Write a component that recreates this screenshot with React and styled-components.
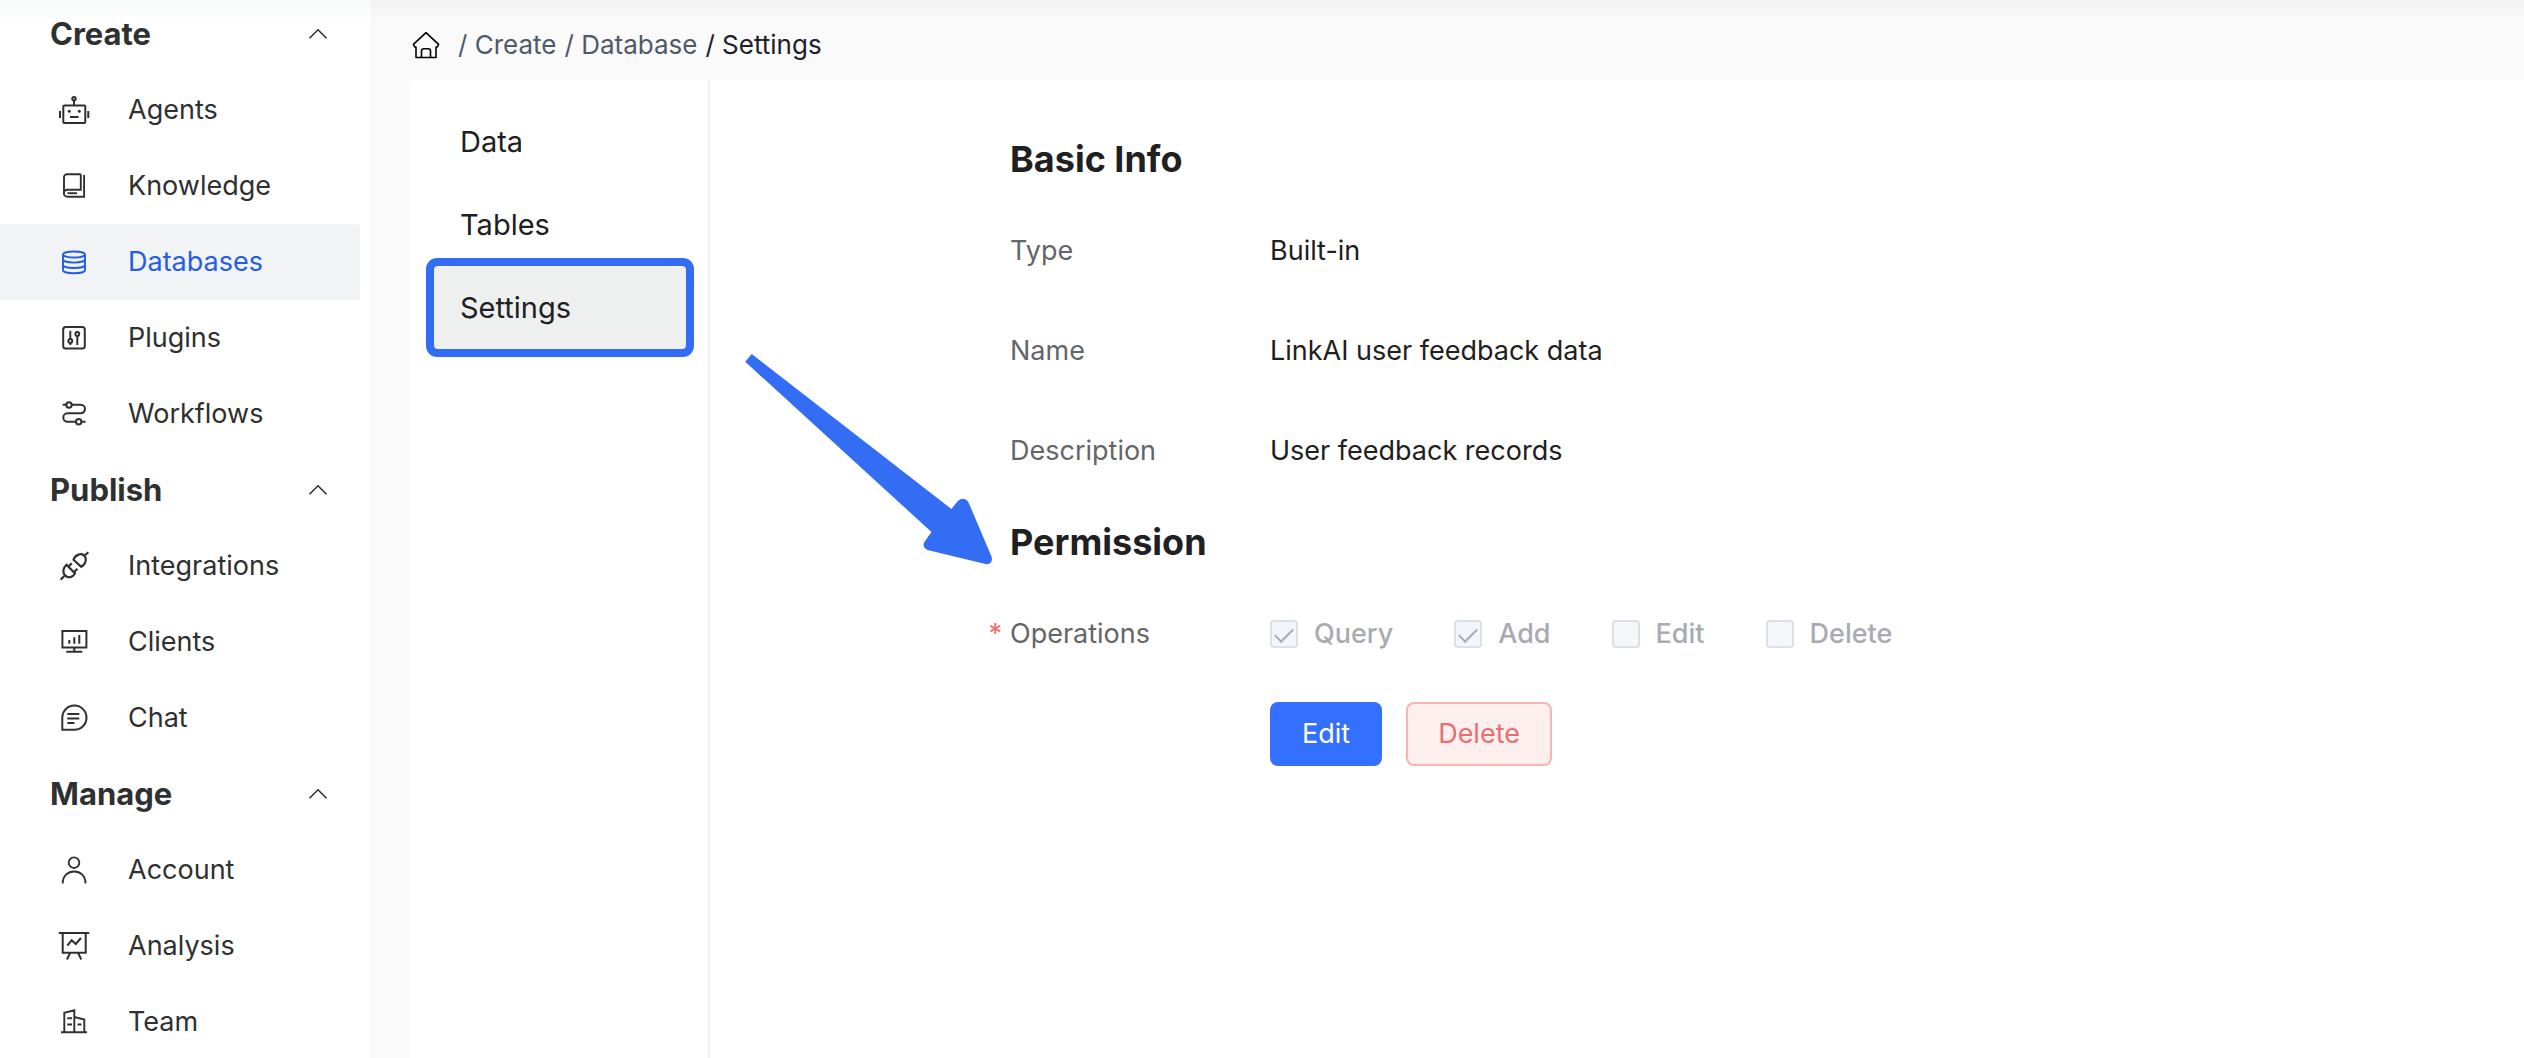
import React, { useState } from "react";
import styled, { createGlobalStyle } from "styled-components";

const Svg = ({ children, width = 2 }) => (
  <svg
    width="32"
    height="32"
    viewBox="0 0 32 32"
    fill="none"
    stroke="currentColor"
    strokeWidth={width}
    aria-hidden="true"
  >
    {children}
  </svg>
);

const HomeIcon = () => (
  <Svg width={1.6}>
    <path
      d="M6 18H4.6L3.4 15.3 16 3.7 28.6 15.3 27.4 18H26V28.5H6Z"
      strokeLinejoin="round"
    />
    <path d="M11.5 28.5V22a2.3 2.3 0 0 1 2.3-2.3h4.4a2.3 2.3 0 0 1 2.3 2.3v6.5" />
  </Svg>
);
const AgentIcon = () => (
  <Svg>
    <rect x="5.3" y="11.5" width="22" height="17.5" rx="1" />
    <circle cx="16" cy="4.7" r="1.7" />
    <path d="M16 6.4v5M2 17v7M30.3 17v7M12 23h8.6" />
    <circle cx="11.3" cy="17.2" r="1.5" fill="currentColor" stroke="none" />
    <circle cx="21.3" cy="17.2" r="1.5" fill="currentColor" stroke="none" />
  </Svg>
);
const BookIcon = () => (
  <Svg width={1.9}>
    <path d="M22.8 4.3H9a3 3 0 0 0-3 3V23.3" />
    <path d="M22.8 4.3V19.8H9.3a3.4 3.4 0 0 0 0 6.9H26.1V5" />
    <path d="M9.5 23.2H19" />
  </Svg>
);
const DatabaseIcon = () => (
  <Svg width={1.9}>
    <ellipse cx="16" cy="8.5" rx="11" ry="3" />
    <path d="M5 8.5v15.7c0 1.7 4.9 3 11 3s11-1.3 11-3V8.5" />
    <path d="M5 13.6c0 1.7 4.9 3 11 3s11-1.3 11-3" />
    <path d="M5 19c0 1.7 4.9 3 11 3s11-1.3 11-3" />
  </Svg>
);
const PluginIcon = () => (
  <Svg>
    <rect x="5.2" y="5" width="21.6" height="21.4" rx="2.5" />
    <path d="M12.3 8.7V17M12.3 21v2M19.3 9v1M19.3 14v9" />
    <circle cx="12.3" cy="19" r="1.9" />
    <circle cx="19.3" cy="12" r="1.9" />
  </Svg>
);
const WorkflowIcon = () => (
  <Svg>
    <path d="M4.7 6.7H8.3M13.8 6.7H22.7a4.3 4.3 0 0 1 0 8.6H9.5a4.2 4.2 0 0 0 0 8.4H18M23.4 23.7H27.6" />
    <circle cx="11" cy="7" r="2.7" />
    <circle cx="20.7" cy="23.7" r="2.7" />
  </Svg>
);
const IntegrationIcon = () => (
  <Svg width={2.2}>
    <path d="M15.5 9.8L23.3 16.8C26.5 15 28.8 11 27.4 7.2 26 4.2 23 3.6 20.6 4.6 18 5.6 16.2 7.4 15.5 9.8Z" />
    <path d="M27 5.3L30.3 2.3M2.7 29.6L6.3 26" />
    <path d="M8.5 14.8L17 23.5C14.7 27.3 10.5 28.6 7.3 25.6 4.3 22.6 4.8 18.2 8.5 14.8Z" />
    <path d="M10.8 16.3L13.8 13.3M16.4 21.7L19.4 18.8" />
  </Svg>
);
const ClientIcon = () => (
  <Svg>
    <rect x="4.4" y="5" width="24" height="16.5" />
    <path d="M11.3 14v3.8M16.3 11.3v6.5M21.3 9v8.8M16.3 21.5v4.2M8.3 25.7h16" />
  </Svg>
);
const ChatIcon = () => (
  <Svg>
    <path d="M4.3 27.7V15.5a12.1 12.1 0 1 1 12.1 12.2Z" />
    <path d="M9.3 12h12M9.3 16.4h12M9.3 21H16.5" />
  </Svg>
);
const AccountIcon = () => (
  <Svg width={1.9}>
    <circle cx="16" cy="8.7" r="5.3" />
    <path d="M4.7 29.5C4.7 22 9.7 17.5 16.1 17.5S27.5 22 27.5 29.5" />
  </Svg>
);
const AnalysisIcon = () => (
  <Svg>
    <path d="M.7 3H31.3M4.7 3V22.7H27.7V3M12.2 22.7L9 29.5M20 22.7L23.3 29.5" />
    <path d="M9.3 15.7L13.7 10.3 17.7 14 23 8" />
  </Svg>
);
const TeamIcon = () => (
  <Svg width={1.9}>
    <path d="M3 26.3H29M6.3 26.3V6.8L16.3 4.3V26.3M16.3 11L26.3 13.6V26.3" />
    <path d="M9.3 12.3H14M9.3 18.5H14M19.5 18.5H23.5" />
  </Svg>
);

const menu = [
  {
    title: "Create",
    items: [
      { name: "Agents", icon: <AgentIcon /> },
      { name: "Knowledge", icon: <BookIcon /> },
      { name: "Databases", icon: <DatabaseIcon /> },
      { name: "Plugins", icon: <PluginIcon /> },
      { name: "Workflows", icon: <WorkflowIcon /> },
    ],
  },
  {
    title: "Publish",
    items: [
      { name: "Integrations", icon: <IntegrationIcon /> },
      { name: "Clients", icon: <ClientIcon /> },
      { name: "Chat", icon: <ChatIcon /> },
    ],
  },
  {
    title: "Manage",
    items: [
      { name: "Account", icon: <AccountIcon /> },
      { name: "Analysis", icon: <AnalysisIcon /> },
      { name: "Team", icon: <TeamIcon /> },
    ],
  },
];

const info = [
  { label: "Type", value: "Built-in" },
  { label: "Name", value: "LinkAI user feedback data" },
  { label: "Description", value: "User feedback records" },
];

const operations = [
  { name: "Query", checked: true },
  { name: "Add", checked: true },
  { name: "Edit", checked: false },
  { name: "Delete", checked: false },
];

const App = () => {
  const [closed, setClosed] = useState({});
  const toggle = (title) => setClosed({ ...closed, [title]: !closed[title] });

  return (
    <Page>
      <GlobalStyle />
      <Sidebar>
        {menu.map(({ title, items }) => (
          <section key={title}>
            <GroupButton
              type="button"
              aria-expanded={!closed[title]}
              onClick={() => toggle(title)}
            >
              {title}
              <svg
                width="20"
                height="12"
                viewBox="0 0 20 12"
                fill="none"
                stroke="currentColor"
                strokeWidth="1.6"
                aria-hidden="true"
              >
                <path d="M1.5 10.3L10 1.8 18.5 10.3" />
              </svg>
            </GroupButton>
            {!closed[title] &&
              items.map(({ name, icon }) => (
                <MenuLink href="#" key={name} $active={name === "Databases"}>
                  {icon}
                  {name}
                </MenuLink>
              ))}
          </section>
        ))}
      </Sidebar>
      <Main>
        <Breadcrumb aria-label="Breadcrumb">
          <a href="#" aria-label="Home">
            <HomeIcon />
          </a>
          <Crumb>
            / <a href="#">Create</a>
          </Crumb>
          <Crumb>
            / <a href="#">Database</a>
          </Crumb>
          <Crumb $current>/ Settings</Crumb>
        </Breadcrumb>
        <Panel>
          <Tabs>
            <Tab href="#">Data</Tab>
            <Tab href="#">Tables</Tab>
            <Tab href="#" $active>
              Settings
            </Tab>
          </Tabs>
          <Content>
            <Arrow
              width="248"
              height="212"
              viewBox="745 354 248 212"
              aria-hidden="true"
            >
              <path d="M745.2 361.7L751.7 354 951.4 509 957.5 501.5C961 497 967 498 969 503.5L991.5 556.5C993 561.5 990.5 565 985.5 564L929.5 550.5C923.5 549 922 545 925 541L931.5 532Z" />
            </Arrow>
            <Title>Basic Info</Title>
            {info.map(({ label, value }) => (
              <Row key={label}>
                <Label>{label}</Label>
                <span>{value}</span>
              </Row>
            ))}
            <Title>Permission</Title>
            <Row>
              <Label $required>Operations</Label>
              <Checks>
                {operations.map(({ name, checked }) => (
                  <CheckLabel key={name}>
                    <Checkbox type="checkbox" defaultChecked={checked} disabled />
                    {name}
                  </CheckLabel>
                ))}
              </Checks>
            </Row>
            <Row>
              <Label />
              <Buttons>
                <Button type="button">Edit</Button>
                <Button type="button" $danger>
                  Delete
                </Button>
              </Buttons>
            </Row>
          </Content>
        </Panel>
      </Main>
    </Page>
  );
};

export default App;

const GlobalStyle = createGlobalStyle`
  * {
    box-sizing: border-box;
  }
  body {
    margin: 0;
    font-family: Inter, "Liberation Sans", sans-serif;
    font-size: 27px;
    line-height: 36px;
    color: #1f2021;
  }
  a {
    color: inherit;
    text-decoration: none;
  }
  button {
    font: inherit;
    cursor: pointer;
  }
`;
const Page = styled.div`
  display: flex;
  height: 100vh;
  overflow: hidden;
  background: #fafafa linear-gradient(#f2f2f2, #fafafa) no-repeat;
  background-size: 100% 20px;
`;
const Sidebar = styled.nav`
  flex: none;
  width: 370px;
  padding-right: 10px;
  overflow: hidden;
  background: #fff linear-gradient(#f7f8f8, #fff) no-repeat;
  background-size: 100% 20px;
  color: #2f3031;
  section:first-child > button {
    height: 68px;
    margin-bottom: 4px;
  }
`;
const GroupButton = styled.button`
  display: flex;
  align-items: center;
  justify-content: space-between;
  width: 100%;
  height: 76px;
  padding: 0 32px 0 50px;
  border: none;
  background: transparent;
  color: inherit;
  font-size: 31px;
  font-weight: 700;
`;
const MenuLink = styled.a`
  display: flex;
  align-items: center;
  gap: 38px;
  height: 76px;
  padding-left: 58px;
  border-radius: 0 4px 4px 0;
  background: ${({ $active }) => ($active ? "#f1f3f5" : "transparent")};
  color: ${({ $active }) => ($active ? "#245ce6" : "inherit")};
`;
const Main = styled.main`
  flex: 1;
  min-width: 0;
  display: flex;
  flex-direction: column;
  padding-left: 40px;
`;
const Breadcrumb = styled.nav`
  display: flex;
  align-items: center;
  gap: 8px;
  height: 80px;
  padding-top: 10px;
  font-size: 26px;
  > a {
    display: flex;
    margin-right: 8px;
    color: #000;
  }
`;
const Crumb = styled.span`
  color: ${({ $current }) => ($current ? "#1d2129" : "#4e5969")};
`;
const Panel = styled.div`
  flex: 1;
  display: flex;
  background: #fff;
  border-top-left-radius: 8px;
`;
const Tabs = styled.nav`
  flex: none;
  width: 300px;
  padding: 20px 22px 0 24px;
  border-right: 2px solid #eee;
`;
const Tab = styled.a`
  display: flex;
  align-items: center;
  height: 83px;
  padding-left: 26px;
  border-radius: 4px;
  font-size: 29px;
  background: ${({ $active }) => ($active ? "#eef0f0" : "transparent")};
  box-shadow: ${({ $active }) => ($active ? "0 0 0 8px #336df4" : "none")};
`;
const Content = styled.div`
  position: relative;
  flex: 1;
  padding: 38px 40px 0 300px;
`;
const Arrow = styled.svg`
  position: absolute;
  left: 35px;
  top: 274px;
  fill: #336df4;
`;
const Title = styled.h2`
  margin: 0;
  font-size: 36px;
  font-weight: 700;
  line-height: 83px;
`;
const Row = styled.div`
  display: flex;
  align-items: center;
  height: 100px;
`;
const Label = styled.span`
  position: relative;
  flex: none;
  width: 260px;
  color: #646569;
  &::before {
    content: ${({ $required }) => ($required ? '"*"' : "none")};
    position: absolute;
    right: 100%;
    margin-right: 8px;
    color: #f56c6c;
  }
`;
const Checks = styled.div`
  display: flex;
  gap: 61px;
`;
const CheckLabel = styled.label`
  display: flex;
  align-items: center;
  gap: 16px;
  color: #a8abb2;
  font-weight: 500;
`;
const Checkbox = styled.input`
  appearance: none;
  display: flex;
  justify-content: center;
  width: 28px;
  height: 28px;
  margin: 0;
  border: 2px solid #dcdfe6;
  border-radius: 4px;
  background: #f5f7fa;
  &:checked {
    background: #f2f6fc;
  }
  &:checked::after {
    content: "";
    width: 8px;
    height: 16px;
    margin-top: 2px;
    border: solid #a8abb2;
    border-width: 0 2px 2px 0;
    transform: rotate(45deg);
  }
`;
const Buttons = styled.div`
  display: flex;
  gap: 24px;
`;
const Button = styled.button`
  height: 64px;
  padding: 0 30px;
  border: 2px solid ${({ $danger }) => ($danger ? "#f5b5b5" : "#3370ff")};
  border-radius: 8px;
  background: ${({ $danger }) => ($danger ? "#feefef" : "#3370ff")};
  color: ${({ $danger }) => ($danger ? "#e66f6f" : "#fff")};
`;
